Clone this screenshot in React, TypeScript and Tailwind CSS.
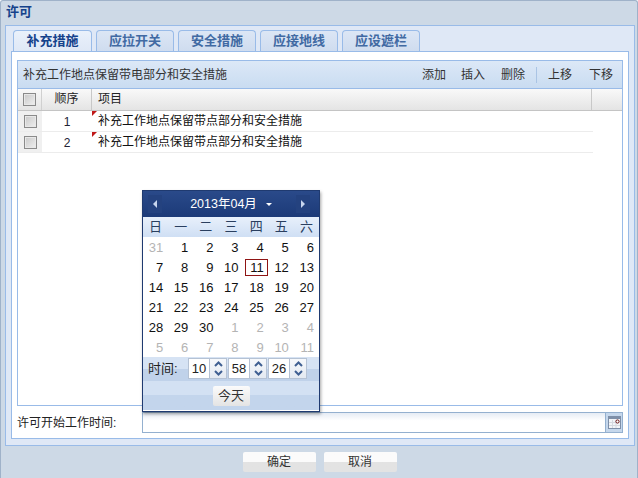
const cjk = "font-['Liberation_Sans','Noto_Sans_CJK_SC',sans-serif]";

const tabs = ["补充措施", "应拉开关", "安全措施", "应接地线", "应设遮栏"];
const rows = [1, 2];
const weekDays = ["日", "一", "二", "三", "四", "五", "六"];
const days = [
  31, 1, 2, 3, 4, 5, 6, 7, 8, 9, 10, 11, 12, 13, 14, 15, 16, 17, 18, 19, 20, 21, 22, 23, 24, 25, 26, 27, 28, 29, 30, 1, 2,
  3, 4, 5, 6, 7, 8, 9, 10, 11,
];

function Checkbox() {
  return (
    <div className="h-[13px] w-[13px] border border-[#8a8a8a] bg-gradient-to-br from-[#c8c8c8] to-[#f0f0f0] shadow-[inset_0_0_0_1px_#e8e8e8]" />
  );
}

function Spinner({ value }: { value: string }) {
  return (
    <div className="flex h-[21px] w-[39px] border border-[#b5c2d4] bg-white">
      <div className="flex-1 text-center text-[13px] leading-[20px] text-[#222]">{value}</div>
      <div className="flex w-[17px] flex-col items-center justify-center gap-[3px] border-l border-[#b5c2d4] bg-gradient-to-b from-[#f6f8fb] to-[#e4eaf2]">
        <svg width="9" height="6" viewBox="0 0 9 6">
          <path d="M1 5 L4.5 1.5 L8 5" fill="none" stroke="#3f5f92" strokeWidth="2" />
        </svg>
        <svg width="9" height="6" viewBox="0 0 9 6">
          <path d="M1 1 L4.5 4.5 L8 1" fill="none" stroke="#3f5f92" strokeWidth="2" />
        </svg>
      </div>
    </div>
  );
}

function DatePicker() {
  return (
    <div className="absolute left-[141px] top-[189px] z-10 h-[222px] w-[178px] border border-[#1f3a70] bg-white shadow-[1px_2px_3px_rgba(0,0,0,0.35)]">
      <div className="flex h-[26px] items-center justify-between bg-gradient-to-b from-[#2a4a8a] to-[#1c3a78] pl-[5px] pr-[9px] text-white">
        <div className="flex h-[18px] w-[14px] items-center justify-center bg-[#24427f]">
          <div className="h-0 w-0 border-y-[4px] border-r-[4px] border-y-transparent border-r-[#c8d6ee]" />
        </div>
        <div className="ml-[4px] flex items-center gap-[9px] text-[12.5px]">
          <span>2013年04月</span>
          <div className="h-0 w-0 border-x-[3px] border-t-[3px] border-x-transparent border-t-white" />
        </div>
        <div className="flex h-[18px] w-[14px] items-center justify-center bg-[#24427f]">
          <div className="h-0 w-0 border-y-[4px] border-l-[4px] border-y-transparent border-l-[#c8d6ee]" />
        </div>
      </div>
      <div className="grid h-[20px] grid-cols-7 items-center bg-gradient-to-b from-[#e8f0fb] to-[#cfdff4] text-center text-[13px] text-[#2a3f5f]">
        {weekDays.map((d) => (
          <div key={d}>{d}</div>
        ))}
      </div>
      <div className="grid grid-cols-7 text-[13px]">
        {days.map((d, i) => {
          const off = i === 0 || i > 30;
          const today = i === 11;
          return (
            <div key={i} className="relative h-[20px] pr-[5px] pt-[1px] text-right leading-[20px]">
              <span className={off ? "text-[#b4b4b4]" : "text-[#111]"}>{d}</span>
              {today && <div className="absolute left-[1px] top-[2px] h-[17px] w-[23px] border border-[#8f1414]" />}
            </div>
          );
        })}
      </div>
      <div className="flex h-[24px] items-start bg-gradient-to-b from-[#d6e3f4] from-50% to-[#c0d2ea] to-50% pl-[5px] pt-[1px] text-[13px] text-[#222]">
        <span className="w-[40px] leading-[21px]">时间:</span>
        <div className="flex gap-[1px]">
          <Spinner value="10" />
          <Spinner value="58" />
          <Spinner value="26" />
        </div>
      </div>
      <div className="flex h-[29px] items-center justify-center bg-gradient-to-b from-[#d3e1f3] from-50% to-[#c3d5ec] to-50%">
        <div className="flex h-[20px] w-[37px] items-center justify-center rounded-[2px] bg-gradient-to-b from-[#fbfbfb] to-[#e4e4e4] text-[13px] text-[#333]">
          今天
        </div>
      </div>
    </div>
  );
}

export default function App() {
  return (
    <div className={`relative flex h-[478px] w-[638px] flex-col overflow-hidden rounded-t-[3px] border-x border-t border-[#9fb2c9] bg-[#cdd9e6] text-[12px] ${cjk}`}>
      <div className="h-[24px] pl-[5px] pt-[3px] text-[13px] font-bold leading-[16px] text-[#15428b]">许可</div>
      <div className="ml-[4px] flex h-[421px] w-[630px] flex-col border border-[#99bbe8] bg-[#dfe8f6] pl-[5px] pr-[5px]">
        <div className="flex h-[25px] items-end gap-[4px] pl-[2px]">
          {tabs.map((t, i) => (
            <div
              key={t}
              className={`flex h-[21px] items-center justify-center rounded-t-[4px] border border-b-0 border-[#99bbe8] text-[13px] font-bold ${i === 0 ? "w-[79px] bg-gradient-to-b from-[#eaf1fb] to-[#dfe8f6] text-[#15428b]" : "w-[78px] bg-gradient-to-b from-[#dce6f5] to-[#cfdcef] text-[#416aa3]"}`}
            >
              {t}
            </div>
          ))}
        </div>
        <div className="flex h-[388px] flex-col border border-[#99bbe8] bg-white p-[5px] pt-[8px]">
          <div className="flex h-[347px] flex-col border border-[#99bbe8]">
            <div className="flex h-[27px] shrink-0 items-center justify-between bg-gradient-to-b from-[#dce8f7] to-[#c9dcf1] pl-[5px] pr-[9px] text-[#333]">
              <span>补充工作地点保留带电部分和安全措施</span>
              <div className="flex items-center">
                <span>添加</span>
                <span className="ml-[15px]">插入</span>
                <span className="ml-[16px]">删除</span>
                <span className="ml-[11px] mr-[11px] h-[16px] w-px bg-[#aac4e4]" />
                <span>上移</span>
                <span className="ml-[17px]">下移</span>
              </div>
            </div>
            <div className="flex h-[23px] shrink-0 items-center border-b border-t border-[#c4c4c4] border-t-[#99bbe8] bg-gradient-to-b from-[#f9f9f9] to-[#e4e4e4] text-[#222]">
              <div className="flex h-full w-[24px] items-center justify-center border-r border-[#d0d0d0]">
                <Checkbox />
              </div>
              <div className="h-full w-[50px] border-r border-[#c8c8c8] text-center leading-[21px]">顺序</div>
              <div className="h-full w-[500px] border-r border-[#c8c8c8] pl-[6px] leading-[21px]">项目</div>
            </div>
            {rows.map((r) => (
              <div key={r} className="flex h-[21px] w-[575px] shrink-0 items-center border-b border-[#ececec] text-[#111]">
                <div className="flex h-full w-[24px] items-center justify-center bg-[#f0f0f0]">
                  <Checkbox />
                </div>
                <div className="w-[50px] pt-[1px] text-center text-[#223]">{r}</div>
                <div className="relative h-full flex-1 pl-[6px] leading-[21px]">
                  <div className="absolute left-0 top-0 h-0 w-0 border-r-[5px] border-t-[5px] border-r-transparent border-t-[#c01818]" />
                  补充工作地点保留带点部分和安全措施
                </div>
              </div>
            ))}
          </div>
          <div className="mt-[6px] flex h-[21px] items-center">
            <span className="w-[125px] text-[#222]">许可开始工作时间:</span>
            <div className="flex h-[21px] flex-1 border border-[#94b0cf]">
              <div className="flex-1 bg-gradient-to-b from-[#e6ecf4] to-[#ffffff] to-40%" />
              <div className="flex w-[17px] items-center justify-center border-l border-[#94b0cf] bg-[#c5d7ec]">
                <svg width="13" height="13" viewBox="0 0 13 13">
                  <rect x="0.5" y="0.5" width="12" height="12" fill="#f3f5f8" stroke="#7e8fa8" />
                  <rect x="1" y="1" width="11" height="2" fill="#7e8fa8" />
                  <path d="M1 6.5H8M1 9.5H12M4.5 4V12M8 4V12" stroke="#d5d9e0" />
                  <circle cx="9.5" cy="5.5" r="1.6" fill="#fff" stroke="#6a1010" />
                </svg>
              </div>
            </div>
          </div>
        </div>
      </div>
      <div className="ml-px flex flex-1 items-start justify-center gap-[8px] pt-[6px] text-[#333]">
        <div className="flex h-[20px] w-[73px] items-center justify-center rounded-[2px] bg-gradient-to-b from-[#fbfbfb] from-50% to-[#e3e3e3] to-50%">确定</div>
        <div className="flex h-[20px] w-[73px] items-center justify-center rounded-[2px] bg-gradient-to-b from-[#fbfbfb] from-50% to-[#e3e3e3] to-50%">取消</div>
      </div>
      <DatePicker />
    </div>
  );
}
